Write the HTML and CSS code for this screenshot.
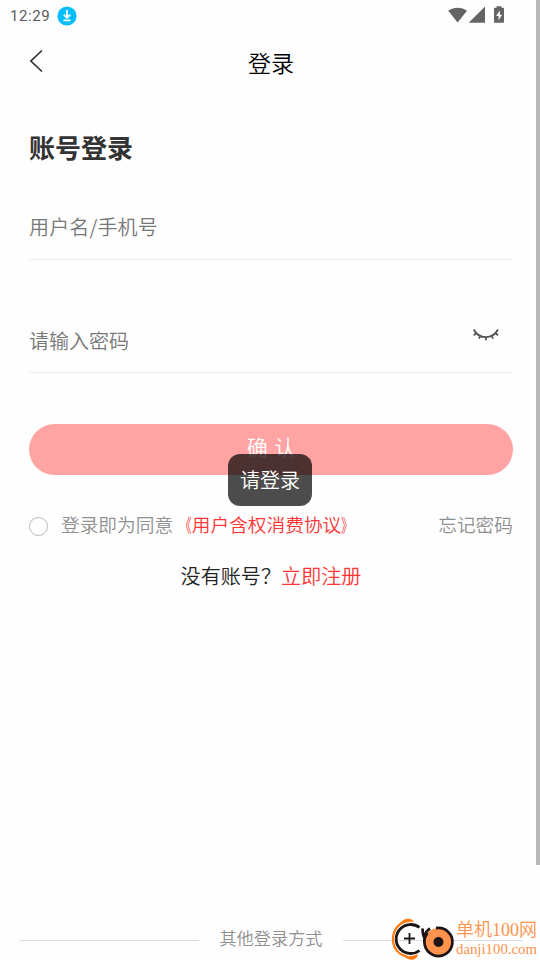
FILE: index.html
```html
<!DOCTYPE html>
<html lang="zh-CN">
<head>
<meta charset="utf-8">
<title>登录</title>
<link rel="stylesheet" href="styles.css">
</head>
<body>
<div class="screen">
  <div class="status">
    <span class="time">12:29</span>
    <svg class="download" width="20" height="20" viewBox="0 0 20 20"><circle cx="10" cy="10" r="9.6" fill="#08bdfb"/><path d="M10 4v7.5M6.8 8.7l3.2 3.2 3.2-3.2M6.5 14.4h7" fill="none" stroke="#fff" stroke-width="1.7"/></svg>
    <svg class="signals" width="58" height="20" viewBox="0 0 58 20" fill="#646464"><path d="M.2 4.8C5.800 .6 13.700 .6 19 4.800L9.600 16.400Z"/><path d="M20.700 16.700H37V.5Z"/><path d="M48.500 .2h5v1.600h1.700q.8 0 .8.800v13.300q0 .8-.8.800h-8.400q-.8 0-.8-.8V2.600q0-.8.8-.8h1.700Z"/><path d="M51.800 4.600l-3.700 5.400h2.500v4.200l3.500-5.500h-2.300Z" fill="#fff"/></svg>
  </div>
  <header class="nav">
    <svg class="back" width="14" height="24" viewBox="0 0 14 24"><path d="M12.900 1.500L1.900 12l11 10.500" fill="none" stroke="#333" stroke-width="1.7"/></svg>
    <span class="title">登录</span>
  </header>
  <main class="form">
    <h1 class="heading">账号登录</h1>
    <div class="field field-name"><span>用户名/手机号</span></div>
    <div class="field field-password"><span>请输入密码</span>
      <svg class="eye" width="28" height="14" viewBox="0 0 28 14" fill="none" stroke="#555" stroke-width="1.800"><path d="M1.800 1.500C7 11.700 20.500 11.700 26 1.500M4.500 5l-2.700 2.300M8.400 7.800L7 10.700M14 9.300v2.900M19.600 7.800l1.400 2.900M23.300 5L26 7.300"/></svg>
    </div>
    <div class="confirm">确 认<div class="toast">请登录</div></div>
    <div class="agree">
      <span class="radio"></span>
      <span class="agree-text">登录即为同意<span class="red"><span class="bracket open">《</span>用户含权消费协议<span class="bracket close">》</span></span></span>
      <span class="forgot">忘记密码</span>
    </div>
    <div class="register">没有账号？<span class="red">立即注册</span></div>
  </main>
  <footer class="others"><i></i><span>其他登录方式</span><i></i></footer>
  <div class="scrollbar"></div>
  <div class="mark">
    <svg width="65" height="44" viewBox="0 0 65 44" fill="none"><path d="M20 4C11 4 4 11 3 20c-.8 10 5 18 14 19.500" stroke="#ff7a10" stroke-width="2.200"/><path d="M9 8C13 0 22 .5 24 5c-4-.5-10 0-15 3ZM13 38.500c4 1 9 1 15-1.200-1 6-8 8-15 1.200Z" fill="#ff7a10"/><path d="M29.500 10.500A14.500 14.500 0 1 0 29.500 33.500M32.500 11.500c0 4 .5 7 2 10M34.500 20c.5-3.500 2.500-6.500 5.500-8.500" stroke="#1c1415" stroke-width="2.800"/><path d="M19.500 16v11M14 21.500h11" stroke="#1c1415" stroke-width="1.800"/><circle cx="48.500" cy="25" r="14" fill="#ff934d"/><path d="M46 11.200a14 14 0 1 1-8.500 5" stroke="#1c1415" stroke-width="2.700"/><circle cx="48.500" cy="25" r="5" fill="#1c1415"/></svg>
    <div class="mark-text"><div class="mark-name">单机100网</div><div class="mark-url">danji100.com</div></div>
  </div>
</div>
</body>
</html>
```
FILE: styles.css
```css
* { box-sizing: border-box; }
body { margin: 0; background: #fefefe; font-family: "Noto Sans CJK SC", sans-serif; font-weight: 350; }
.screen { position: relative; width: 540px; height: 960px; overflow: hidden; display: flex; flex-direction: column; }
svg { display: block; flex: none; }
.status { height: 32px; padding: 0 35px 0 10px; display: flex; align-items: center; }
.time { width: 47px; font: 400 15px/20px Roboto, sans-serif; letter-spacing: .6px; color: #5c5c5c; }
.signals { width: 58px; margin: 0 -1px 0 auto; }
.nav { height: 60px; padding: 0 29px; display: flex; align-items: flex-start; }
.back { margin-top: 17px; }
.title { flex: 1; margin: 13px 12px 0 0; text-align: center; font-size: 23px; line-height: 34px; color: #000; }
.form { padding: 37px 27px 0 29px; }
.heading { margin: 0; font-size: 26px; line-height: 36px; font-weight: 700; color: #333; }
.field { height: 95px; padding-top: 47px; border-bottom: 1px solid #ebebeb; display: flex; justify-content: space-between; font-size: 20px; line-height: 30px; color: #777; }
.field-name { letter-spacing: .15px; }
.field-password { height: 113px; padding-top: 66px; }
.eye { margin: 2px 13px 0 0; }
.confirm { position: relative; height: 51px; margin-top: 51px; border-radius: 26px; background: #ffa3a3; color: #fff; font-size: 21px; line-height: 45px; text-align: center; word-spacing: 2px; }
.toast { position: absolute; left: 199px; top: 30px; width: 84px; height: 52px; border-radius: 12px; background: rgba(0, 0, 0, .7); color: #fff; font-size: 20px; line-height: 52px; }
.agree { height: 28px; margin-top: 35px; display: flex; align-items: center; font-size: 18.700px; line-height: 28px; color: #909090; white-space: nowrap; }
.radio { width: 19px; height: 19px; margin: 5px 13px 0 0; border: 1px solid #bbb; border-radius: 50%; }
.bracket { display: inline-block; transform: scaleX(.65); }
.open { transform-origin: right; }
.close { transform-origin: left; }
.forgot { margin-left: auto; }
.red { color: #ff3636; }
.register { margin-top: 23px; text-align: center; font-size: 20.100px; line-height: 30px; color: #222; }
.others { height: 26px; margin: auto 17px 8px 19px; display: flex; align-items: center; justify-content: space-between; font-size: 17.200px; line-height: 26px; color: #909090; }
.others span { margin-top: -2px; }
.others i { width: 180px; height: 1px; margin-top: 3px; background: #ddd; }
.scrollbar { position: absolute; right: 0; top: 0; width: 4px; height: 865px; background: #b8b8b8; }
.mark { position: absolute; left: 390px; top: 917px; display: flex; color: #ff934d; white-space: nowrap; }
.mark-text { margin-left: 1px; font-family: "Liberation Serif", "Noto Sans CJK SC", serif; }
.mark-name { font-size: 18px; line-height: 26px; font-weight: 350; }
.mark-url { font-size: 14.800px; line-height: 12px; }
```
